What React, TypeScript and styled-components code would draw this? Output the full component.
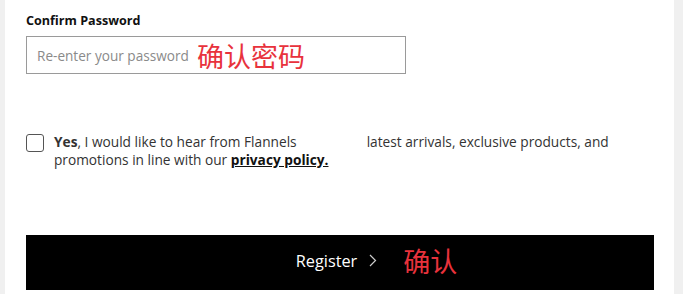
import styled, { createGlobalStyle } from 'styled-components';

const GlobalStyle = createGlobalStyle`
  html, body {
    margin: 0;
    padding: 0;
    background: #f0f0f0;
    font-family: "Open Sans", "Noto Sans CJK SC", sans-serif;
  }
`;

const Panel = styled.section`
  margin: 0 9px 0 5px;
  height: 294px;
  background: #ffffff;
  padding: 12px 20px 0 21px;
  box-sizing: border-box;
  display: flex;
  flex-direction: column;
`;

const FieldLabel = styled.label`
  font-size: 12.6px;
  font-weight: 700;
  color: #111;
  line-height: 17px;
`;

const InputWrapper = styled.div`
  margin-top: 7px;
  width: 380px;
  height: 38px;
  box-sizing: border-box;
  border: 1px solid #9a9a9a;
  display: flex;
  align-items: center;
  padding-left: 10px;
`;

const PasswordInput = styled.input`
  border: none;
  outline: none;
  width: 156px;
  padding: 0;
  font-family: "Open Sans", sans-serif;
  font-size: 13.6px;
  color: #333;
  &::placeholder {
    color: #8a8a8a;
  }
`;

const Note = styled.span<{ size: number }>`
  color: #e8323c;
  font-family: "Noto Sans CJK SC", sans-serif;
  font-size: ${(p) => p.size}px;
  line-height: 1;
  margin-left: 4px;
`;

const ConsentRow = styled.div`
  margin-top: 59px;
  display: flex;
  align-items: flex-start;
  gap: 10px;
`;

const Checkbox = styled.span`
  flex: none;
  width: 18px;
  height: 18px;
  box-sizing: border-box;
  border: 1px solid #555;
  border-radius: 3px;
  margin-top: 1px;
`;

const ConsentText = styled.p`
  margin: 0;
  font-size: 13.7px;
  line-height: 18px;
  color: #333;
  width: 595px;
`;

const Gap = styled.span`
  display: inline-block;
  width: 70px;
`;

const Policy = styled.a`
  color: #111;
  font-weight: 700;
  text-decoration: underline;
`;

const RegisterButton = styled.button`
  margin-top: 66px;
  width: 628px;
  height: 55px;
  background: #000;
  border: none;
  display: flex;
  align-items: center;
  justify-content: center;
  padding: 0 0 4px 73px;
  color: #fff;
  font-family: "Open Sans", sans-serif;
  font-size: 16.3px;
  cursor: pointer;
`;

const Chevron = styled.svg`
  margin-left: 12px;
  margin-right: 22px;
`;

export default function App() {
  return (
    <>
      <GlobalStyle />
      <Panel>
        <FieldLabel>Confirm Password</FieldLabel>
        <InputWrapper>
          <PasswordInput type="password" placeholder="Re-enter your password" />
          <Note size={27}>确认密码</Note>
        </InputWrapper>
        <ConsentRow>
          <Checkbox />
          <ConsentText>
            <b>Yes</b>, I would like to hear from Flannels<Gap />latest arrivals, exclusive products, and
            promotions in line with our <Policy>privacy policy.</Policy>
          </ConsentText>
        </ConsentRow>
        <RegisterButton>
          Register
          <Chevron width="8" height="13" viewBox="0 0 8 13">
            <path d="M1 1l5.5 5.5L1 12" fill="none" stroke="#ccc" strokeWidth="1.2" />
          </Chevron>
          <Note size={27}>确认</Note>
        </RegisterButton>
      </Panel>
    </>
  );
}
